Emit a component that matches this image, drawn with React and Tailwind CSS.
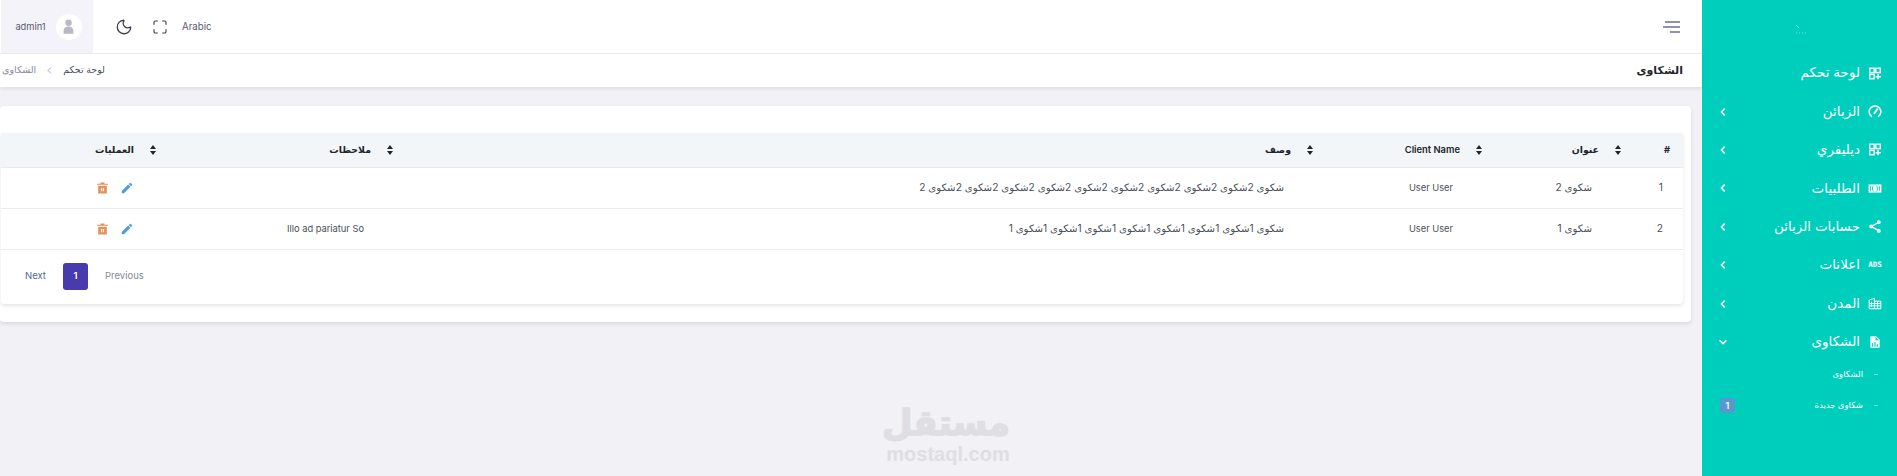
import { Moon, Maximize } from "lucide-react";

const GridPlusIcon = () => (
  <svg viewBox="0 0 24 24" className="w-[15px] h-[15px]" fill="none" stroke="currentColor" strokeWidth="2.4">
    <rect x="3" y="3" width="7.5" height="7.5" />
    <rect x="13.5" y="3" width="7.5" height="7.5" />
    <rect x="3" y="13.5" width="7.5" height="7.5" />
    <path d="M17.2 13v9M13 17.5h9" />
  </svg>
);

const GaugeIcon = () => (
  <svg viewBox="0 0 24 24" className="w-[15px] h-[15px]" fill="none" stroke="currentColor" strokeWidth="2.6">
    <path d="M6 20.5A10 10 0 1 1 18 20.5" strokeLinecap="round" />
    <path d="M11 15l5-7" strokeWidth="3.2" strokeLinecap="round" />
  </svg>
);

const CashIcon = () => (
  <svg viewBox="0 0 24 24" className="w-[15px] h-[15px]" fill="currentColor">
    <path d="M1 5h22v14H1z" />
    <ellipse cx="12" cy="12" rx="5" ry="5.500" fill="#00cebc" />
    <ellipse cx="12" cy="12" rx="3.400" ry="5.500" fill="currentColor" />
    <rect x="3.500" y="8" width="1.500" height="8" fill="#00cebc" />
    <rect x="19" y="8" width="1.500" height="8" fill="#00cebc" />
  </svg>
);

const ShareIcon = () => (
  <svg viewBox="0 0 24 24" className="w-[15px] h-[15px]" fill="currentColor" stroke="currentColor" strokeWidth="2.2">
    <path d="M18.5 5 5.5 12l13 7" fill="none" />
    <circle cx="18.5" cy="4.500" r="2.200" />
    <circle cx="5.500" cy="12" r="2.200" />
    <circle cx="18.5" cy="19.500" r="2.200" />
  </svg>
);

const CityIcon = () => (
  <svg viewBox="0 0 24 24" className="w-[15px] h-[15px]" fill="none" stroke="currentColor" strokeWidth="1.700">
    <path d="M2 21V6l9-3v18M11 8h11v13H2M6 9v9M16.500 8v13M11 12h11M11 16h11M2 12h9M2 16h9" />
  </svg>
);

const FileChartIcon = () => (
  <svg viewBox="0 0 24 24" className="w-[16px] h-[16px]" fill="currentColor">
    <path d="M13 9h5.500L13 3.500V9M6 2h8l6 6v12a2 2 0 0 1-2 2H6a2 2 0 0 1-2-2V4c0-1.110.890-2 2-2m1 18h2v-6H7v6m4 0h2v-8h-2v8m4 0h2v-4h-2v4Z" />
  </svg>
);

const AdsIcon = () => (
  <span className="text-[7.500px] font-bold leading-none font-['DejaVu_Sans_Mono',monospace]">ADS</span>
);

const ArrowLeft = ({ className }) => (
  <svg viewBox="0 0 24 24" className={className} fill="none" stroke="currentColor" strokeLinecap="round" strokeLinejoin="round">
    <path d="M15 5l-7 7 7 7" />
  </svg>
);

const ArrowDown = ({ className }) => (
  <svg viewBox="0 0 24 24" className={className} fill="none" stroke="currentColor" strokeLinecap="round" strokeLinejoin="round">
    <path d="M5 9l7 7 7-7" />
  </svg>
);

const SortIcon = () => (
  <svg viewBox="0 0 6 10" className="w-[6px] h-[10px] shrink-0 text-[#212529]" fill="currentColor">
    <path d="M3 0l3 4H0zM3 10L0 6h6z" />
  </svg>
);

const TrashIcon = () => (
  <svg viewBox="0 0 14 14" className="w-[11px] h-[12px] text-[#e0935a]" fill="currentColor">
    <path d="M4.500 0h5v1.600H14V3H0V1.600h4.500z" />
    <path fillRule="evenodd" d="M1.500 4h11v10h-11zM5 7v4h1.500V7zM7.500 7v4H9V7z" />
  </svg>
);

const PencilIcon = () => (
  <svg viewBox="0 0 24 24" className="w-[14px] h-[14px] text-[#4a9ee0]" fill="currentColor">
    <path d="M20.710 7.040c.390-.390.390-1.040 0-1.410l-2.340-2.340c-.370-.390-1.020-.390-1.410 0l-1.840 1.830 3.750 3.750M3 17.250V21h3.750L17.810 9.930l-3.750-3.750L3 17.250Z" />
  </svg>
);

const menu = [
  { label: "لوحة تحكم", icon: GridPlusIcon },
  { label: "الزبائن", icon: GaugeIcon, arrow: true },
  { label: "ديليفري", icon: GridPlusIcon, arrow: true },
  { label: "الطلبيات", icon: CashIcon, arrow: true },
  { label: "حسابات الزبائن", icon: ShareIcon, arrow: true },
  { label: "اعلانات", icon: AdsIcon, arrow: true },
  { label: "المدن", icon: CityIcon, arrow: true },
  { label: "الشكاوى", icon: FileChartIcon, open: true },
];

function Sidebar() {
  return (
    <aside className="w-[195px] shrink-0 bg-[#00cebc] text-white">
      <div className="h-[54px] flex items-center justify-center pl-[3px]">
        <svg viewBox="0 0 12 10" className="w-[12px] h-[10px] text-white/40 mt-1" fill="none" stroke="currentColor" strokeWidth="1">
          <path d="M1 1l3 3M1 9h1M4 9h1M7 9h1M10 9h1" />
        </svg>
      </div>
      <nav>
        {menu.map(({ label, icon: Icon, arrow, open }) => (
          <div key={label} className="h-[38.400px] flex items-center justify-between pr-[15px] pl-[16px]">
            <div className="flex items-center gap-[8px]">
              <span className="w-[14px] flex justify-center">
                <Icon />
              </span>
              <span className="text-[13.500px] leading-none">{label}</span>
            </div>
            {arrow && <ArrowLeft className="w-[10px] h-[10px] stroke-[4]" />}
            {open && <ArrowDown className="w-[10px] h-[10px] stroke-[4]" />}
          </div>
        ))}
        <div className="-mt-[2px] text-[8.500px] font-medium">
          <SubItem label="الشكاوى" />
          <SubItem label="شكاوى جديدة" badge="1" />
        </div>
      </nav>
    </aside>
  );
}

function SubItem({ label, badge }) {
  return (
    <div className="h-[31px] flex items-center justify-between pr-[19px] pl-[18px]">
      <div className="flex items-center gap-[11px]">
        <span className="w-[4px] h-px bg-white/40" />
        <span>{label}</span>
      </div>
      {badge && (
        <span className="w-[15px] h-[15px] rounded-[4px] bg-[#5b97cf] flex items-center justify-center text-[9px] font-semibold">
          {badge}
        </span>
      )}
    </div>
  );
}

function TopBar() {
  return (
    <header className="h-[54px] bg-white border-b border-[#ececf1] flex items-stretch justify-between pr-[22px] pl-px">
      <svg viewBox="0 0 17 12" className="w-[17px] h-[12px] self-center text-[#6f6e9c]" fill="none" stroke="currentColor" strokeWidth="1.500">
        <path d="M2 1h15M0 6h17M7 11h10" />
      </svg>
      <div className="flex items-stretch">
        <span className="self-center mt-[2px] ml-[14px] text-[9.700px] text-[#5a5a6e]">Arabic</span>
        <Maximize className="self-center ml-[19px] w-[16px] h-[16px] text-[#3c3c4c]" strokeWidth={1.700} />
        <Moon className="self-center ml-[22px] w-[18px] h-[18px] text-[#3c3c4c]" strokeWidth={1.700} />
        <div className="w-[92px] bg-[#f3f3f9] flex items-center justify-center gap-[10px] pl-[3px]">
          <div className="w-[26px] h-[26px] rounded-full bg-white flex items-center justify-center">
            <svg viewBox="0 0 16 18" className="w-[13px] h-[15px] text-[#bcb7c6]" fill="currentColor">
              <circle cx="8" cy="4.500" r="4" />
              <path d="M2 18v-4c0-3 2.500-5 6-5s6 2 6 5v4z" />
            </svg>
          </div>
          <span className="text-[9.300px] text-[#5a5a6e]">admin1</span>
        </div>
      </div>
    </header>
  );
}

function Breadcrumb() {
  return (
    <div className="h-[33px] bg-white shadow-[0_2px_4px_rgba(0,0,0,0.08)] flex items-center justify-between pr-[19px] pl-[2px] relative">
      <h1 className="text-[11px] font-bold text-[#212529]">الشكاوى</h1>
      <div className="flex items-center gap-[9px] text-[9.500px]">
        <span className="text-[#495057]">لوحة تحكم</span>
        <ArrowLeft className="w-[9px] h-[9px] text-[#878a99] stroke-2" />
        <span className="text-[#878a99]">الشكاوى</span>
      </div>
    </div>
  );
}

const columns = [
  { label: "#", width: "w-[61px]" },
  { label: "عنوان", width: "w-[139px]" },
  { label: "Client Name", width: "w-[169px]" },
  { label: "وصف", width: "w-[920px]" },
  { label: "ملاحظات", width: "w-[237px]" },
  { label: "العمليات", width: "w-[156px]" },
];

const rows = [
  {
    id: 1,
    title: "شكوى 2",
    client: "User User",
    description: "شكوى 2شكوى 2شكوى 2شكوى 2شكوى 2شكوى 2شكوى 2شكوى 2شكوى 2شكوى 2",
    notes: "",
  },
  {
    id: 2,
    title: "شكوى 1",
    client: "User User",
    description: "شكوى 1شكوى 1شكوى 1شكوى 1شكوى 1شكوى 1شكوى 1شكوى 1",
    notes: "Illo ad pariatur So",
  },
];

function ComplaintsTable() {
  return (
    <table className="w-full table-fixed border-collapse text-[10.200px] text-[#495057]">
      <colgroup>
        {columns.map((c) => (
          <col key={c.label} className={c.width} />
        ))}
      </colgroup>
      <thead>
        <tr className="h-[34px] bg-[#f3f6f9] border-b border-[#e9ebec] text-[9.400px]">
          {columns.map((c, i) =>
            i === 0 ? (
              <th key={c.label} className="pr-[13px] text-right font-bold text-[#212529]">
                {c.label}
              </th>
            ) : (
              <th key={c.label} className="pr-px font-semibold text-[#212529]">
                <div className="flex items-center gap-[16px]">
                  <SortIcon />
                  <span>{c.label}</span>
                </div>
              </th>
            )
          )}
        </tr>
      </thead>
      <tbody>
        {rows.map((r) => (
          <tr key={r.id} className="h-[41px] border-b border-[#e9ebec]">
            <td className="pr-[20px]">{r.id}</td>
            <td className="pr-[30px]">{r.title}</td>
            <td className="pr-[30px] text-[9.300px]">{r.client}</td>
            <td className="pr-[30px]">{r.description}</td>
            <td className="pr-[30px] text-[9.300px]">{r.notes}</td>
            <td className="pr-[23px]">
              <div className="flex items-center gap-[12px]">
                <PencilIcon />
                <TrashIcon />
              </div>
            </td>
          </tr>
        ))}
      </tbody>
    </table>
  );
}

function Pagination() {
  return (
    <div className="h-[54px] flex items-center justify-end gap-[17px] pl-[24px] text-[9.500px]">
      <span className="text-[#878a99]">Previous</span>
      <span className="w-[25px] h-[27px] rounded-[3px] bg-[#473bad] text-white font-semibold flex items-center justify-center">
        1
      </span>
      <span className="text-[#4f6a9c]">Next</span>
    </div>
  );
}

export default function App() {
  return (
    <div dir="rtl" className="relative flex h-[476px] overflow-hidden bg-[#f1f1f6] font-['Inter','DejaVu_Sans',sans-serif]">
      <Sidebar />
      <main className="flex-1 min-w-0">
        <TopBar />
        <Breadcrumb />
        <section className="mt-[19px] mr-[11px] bg-white rounded-[4px] shadow-[0_2px_4px_rgba(0,0,0,0.1)] pt-[27px] pb-[18px]">
          <div className="mr-[8px] ml-px rounded-b-[4px] shadow-[0_2px_4px_rgba(0,0,0,0.1)]">
            <ComplaintsTable />
            <Pagination />
          </div>
        </section>
      </main>
      {/* mostaql watermark */}
      <div className="absolute left-[886px] top-[399px] w-[124px] text-center text-[#dedee3] pointer-events-none">
        <div className="text-[35px] leading-[46px] font-bold [-webkit-text-stroke:1.500px_#dedee3]">مستقل</div>
        <div dir="ltr" className="text-[20px] leading-[18px] font-bold font-['Liberation_Sans',sans-serif]">mostaql.com</div>
      </div>
    </div>
  );
}
